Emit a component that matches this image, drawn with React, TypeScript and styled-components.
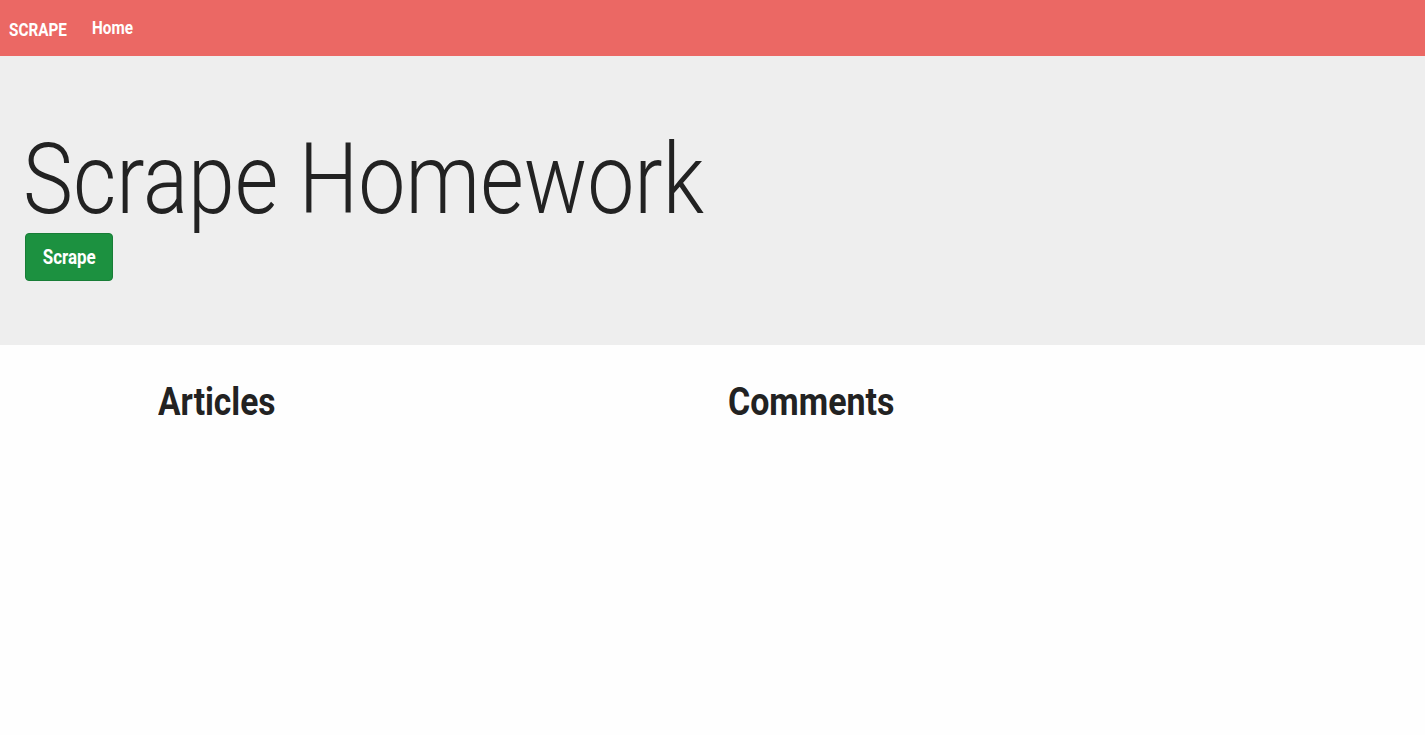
import React from "react";
import styled, { createGlobalStyle } from "styled-components";

const GlobalStyle = createGlobalStyle`
  body {
    margin: 0;
    background-color: #fefefe;
    color: #222222;
    font-family: Roboto, "Liberation Sans", sans-serif;
  }
`;

// narrow face stand-in: squeeze the glyphs sideways
const Narrow = styled.span<{ origin?: string; scale?: number }>`
  display: inline-block;
  transform: scaleX(${(props) => props.scale || 0.85});
  transform-origin: ${(props) => props.origin || "left"};
`;

const Navbar = styled.nav`
  height: 56px;
  background-color: #eb6864;
  display: flex;
  align-items: center;
  padding: 0 9px;
  gap: 15px;
`;

const Brand = styled.a`
  color: #ffffff;
  font-size: 18px;
  font-weight: bold;
  text-decoration: none;
  padding-top: 2px;
`;

const NavLink = styled.a`
  color: #ffffff;
  font-size: 18px;
  font-weight: bold;
  text-decoration: none;
  margin-bottom: 1px;
`;

const Jumbotron = styled.header`
  height: 289px;
  box-sizing: border-box;
  background-color: #eeeeee;
  padding: 69px 25px 0;
  display: flex;
  flex-direction: column;
  align-items: flex-start;
`;

const Title = styled.h1`
  margin: 0 0 0 -2px;
  font-size: 99px;
  font-weight: 300;
  line-height: 108px;
`;

const Button = styled.button`
  font-family: inherit;
  font-size: 20px;
  font-weight: bold;
  color: #ffffff;
  background-color: #1c9140;
  border: 1px solid #187d37;
  border-radius: 4px;
  width: 88px;
  height: 48px;
  padding: 0;
  cursor: pointer;
`;

const Container = styled.main`
  width: 1140px;
  margin: 0 auto;
  display: grid;
  grid-template-columns: 1fr 1fr;
`;

const Column = styled.section`
  padding: 0 15px;
`;

const Heading = styled.h2`
  margin: 35px 0 0;
  font-size: 39px;
  font-weight: bold;
  line-height: 44px;
`;

function App() {
  return (
    <>
      <GlobalStyle />
      <Navbar>
        <Brand href="#">
          <Narrow>SCRAPE</Narrow>
        </Brand>
        <NavLink href="#">
          <Narrow>Home</Narrow>
        </NavLink>
      </Navbar>
      <Jumbotron>
        <Title>
          <Narrow>Scrape Homework</Narrow>
        </Title>
        <Button>
          <Narrow origin="center">Scrape</Narrow>
        </Button>
      </Jumbotron>
      <Container>
        <Column>
          <Heading>
            <Narrow scale={0.86}>Articles</Narrow>
          </Heading>
        </Column>
        <Column>
          <Heading>
            <Narrow scale={0.87}>Comments</Narrow>
          </Heading>
        </Column>
      </Container>
    </>
  );
}

export default App;
